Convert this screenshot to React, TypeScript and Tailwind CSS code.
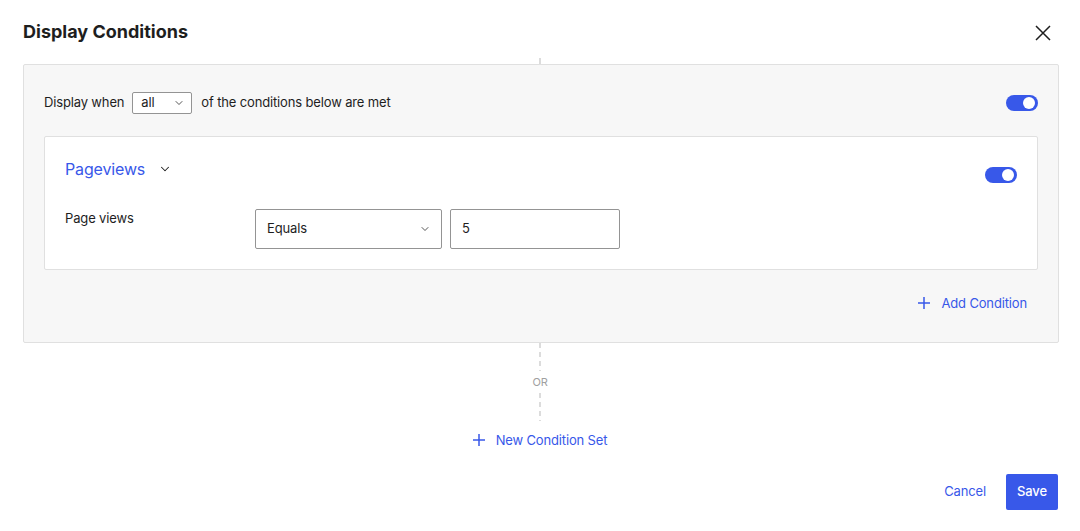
import { ChevronDown } from "lucide-react";

function Toggle() {
  return (
    <div className="relative h-[16px] w-[32px] rounded-full bg-[#3858e9]">
      <div className="absolute right-[3px] top-[2px] h-[12px] w-[12px] rounded-full bg-white" />
    </div>
  );
}

function Plus() {
  return (
    <svg width="12" height="12" viewBox="0 0 12 12" fill="none" stroke="currentColor" strokeWidth="1.5">
      <path d="M6 0v12M0 6h12" />
    </svg>
  );
}

function Dashes({ h }: { h: string }) {
  return (
    <div
      className={`w-[2px] ${h} bg-[repeating-linear-gradient(to_bottom,#dcdcdc_0_5px,transparent_5px_9px)]`}
    />
  );
}

export default function App() {
  return (
    <div className="h-[531px] w-[1080px] bg-white font-['Inter',sans-serif] tracking-[-0.15px] text-[#1e1e1e]">
      <div className="flex h-[58px] items-start justify-between pl-[23px] pr-[29px] pt-[20px]">
        <h1 className="text-[18px] font-bold leading-[24px] tracking-normal">Display Conditions</h1>
        <svg className="mt-[5px]" width="16" height="16" viewBox="0 0 16 16" fill="none" stroke="#1e1e1e" strokeWidth="1.5">
          <path d="M1 1l14 14M15 1L1 15" />
        </svg>
      </div>
      <div className="flex justify-center">
        <div className="h-[6px] w-[2px] bg-[#dcdcdc]" />
      </div>

      <div className="ml-[23px] mr-[21px] rounded-[2px] border border-[#e0e0e0] bg-[#f7f7f7] px-[20px] pb-[30px] pt-[27px]">
        <div className="flex items-center justify-between">
          <div className="flex items-center text-[13px]">
            <span>Display when</span>
            <div className="ml-[8px] mr-[9px] flex h-[22px] w-[60px] items-center justify-between rounded-[2px] border border-[#949494] bg-white pl-[8px] pr-[6px]">
              <span>all</span>
              <ChevronDown size={12} strokeWidth={1.5} />
            </div>
            <span>of the conditions below are met</span>
          </div>
          <Toggle />
        </div>

        <div className="mt-[22px] rounded-[2px] border border-[#e0e0e0] bg-white px-[20px] pb-[20px] pt-[20px]">
          <div className="flex h-[24px] items-start justify-between">
            <div className="flex items-center gap-[13px]">
              <span className="text-[16px] leading-[24px] text-[#3858e9]">Pageviews</span>
              <ChevronDown size={14} strokeWidth={1.75} />
            </div>
            <div className="mt-[10px]">
              <Toggle />
            </div>
          </div>
          <div className="mt-[28px] flex items-start text-[13px]">
            <span className="w-[190px] leading-[18px]">Page views</span>
            <div className="flex gap-[8px]">
              <div className="flex h-[40px] w-[187px] items-center justify-between rounded-[2px] border border-[#949494] pl-[11px] pr-[10px]">
                <span>Equals</span>
                <ChevronDown size={12} strokeWidth={1.5} />
              </div>
              <div className="flex h-[40px] w-[170px] items-center rounded-[2px] border border-[#949494] px-[11px]">
                5
              </div>
            </div>
          </div>
        </div>

        <div className="mr-[11px] mt-[24px] flex justify-end">
          <div className="flex items-center gap-[11px] text-[13px] leading-[18px] text-[#3858e9]">
            <Plus />
            <span>Add Condition</span>
          </div>
        </div>
      </div>

      <div className="flex flex-col items-center">
        <Dashes h="h-[28px]" />
        <span className="my-[4px] text-[11px] leading-[14px] text-[#a0a0a0]">OR</span>
        <Dashes h="h-[28px]" />
        <div className="mt-[10px] flex items-center gap-[11px] text-[13px] leading-[18px] text-[#3858e9]">
          <Plus />
          <span>New Condition Set</span>
        </div>
      </div>

      <div className="mt-[25px] flex items-center justify-end gap-[20px] pr-[22px] text-[13px]">
        <span className="text-[#3858e9]">Cancel</span>
        <button className="h-[36px] w-[52px] rounded-[2px] bg-[#3858e9] font-medium text-white">Save</button>
      </div>
    </div>
  );
}
